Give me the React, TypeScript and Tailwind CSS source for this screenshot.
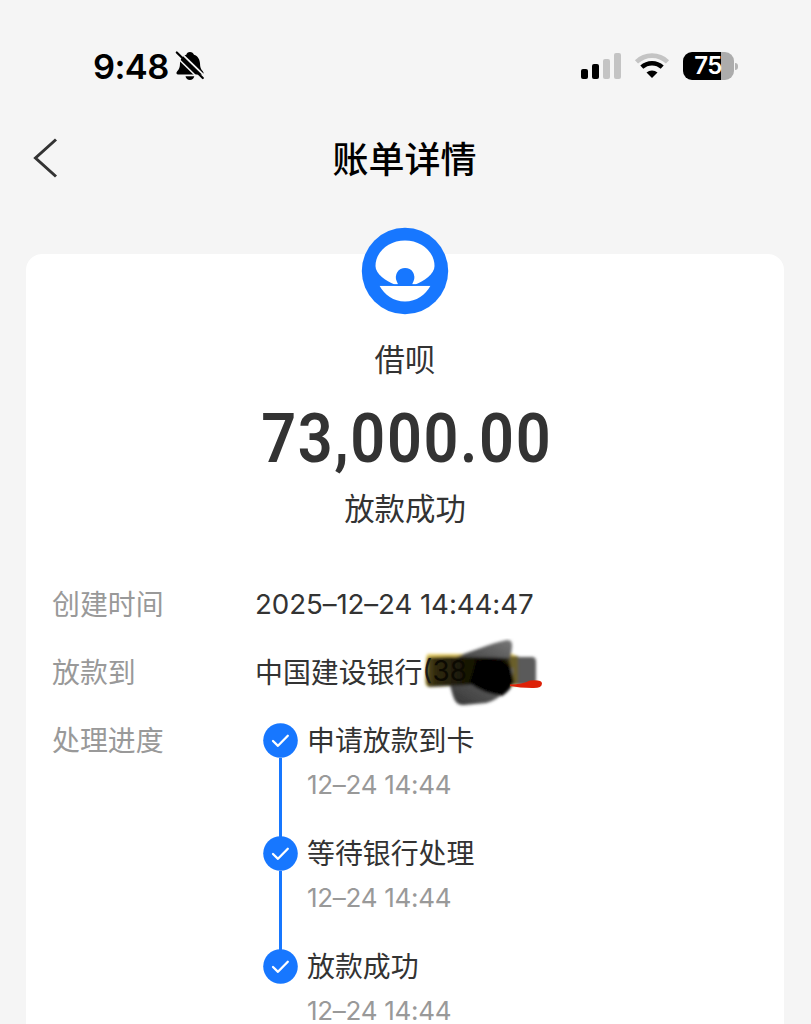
import React from 'react';

type Step = {
	title: string;
	time: string;
};

const STEPS: Step[] = [
	{ title: '申请放款到卡', time: '12–24 14:44' },
	{ title: '等待银行处理', time: '12–24 14:44' },
	{ title: '放款成功', time: '12–24 14:44' },
];

const BellOffIcon = () => (
	<svg className="ml-[6px] h-[32px] w-[30px]" viewBox="0 0 30 32">
		<path
			d="M15 2c-2 0-3.400 1.200-3.700 2.700C7 6 5.200 9.500 5 13.500c-.1 4-.8 5.600-2.800 7.700-1.400 1.500-.8 3.300 1 3.300h23.600c1.800 0 2.400-1.800 1-3.300-2-2.100-2.700-3.700-2.800-7.700-.2-4-2-7.500-6-8.800C18.400 3.200 17 2 15 2z"
			fill="#000"
		/>
		<path d="M10.500 26.300h8.800c-.4 2.400-2.200 3.800-4.400 3.800s-4-1.400-4.400-3.800z" fill="#000" />
		<path d="M3.800 0.800L31.300 27.500" stroke="#f5f5f5" strokeWidth="1.800" />
		<path d="M1.800 2.500L27.800 28" stroke="#000" strokeWidth="2.200" strokeLinecap="round" />
		<path d="M0 5.500L25.500 30.500" stroke="#f5f5f5" strokeWidth="1.600" />
	</svg>
);

const WifiIcon = () => (
	<svg className="ml-[13px] h-[28px] w-[36px]" viewBox="0 0 36 28">
		<path d="M2.500 9.800a22.500 22.500 0 0 1 31 0" fill="none" stroke="#c4c4c4" strokeWidth="4.600" />
		<path d="M7.800 15.200a15 15 0 0 1 20.400 0" fill="none" stroke="#000" strokeWidth="4.400" />
		<path d="M12.500 20.600a8 8 0 0 1 11 0L18 26z" fill="#000" />
	</svg>
);

const StatusBar = () => (
	<div className="flex h-[116px] items-center pt-[16px] pr-[73px] pl-[93px]">
		<span className="mt-[1px] font-['Inter',sans-serif] text-[34.500px] leading-[40px] font-semibold tracking-[-0.6px] text-black">
			9:48
		</span>
		<BellOffIcon />
		<div className="ml-auto flex items-center">
			<div className="flex h-[26px] items-end gap-[4px]">
				<i className="h-[10px] w-[7px] rounded-[2px] bg-black" />
				<i className="h-[15px] w-[7px] rounded-[2px] bg-black" />
				<i className="h-[20px] w-[7px] rounded-[2px] bg-[#c4c4c4]" />
				<i className="h-[26px] w-[7px] rounded-[2px] bg-[#c4c4c4]" />
			</div>
			<WifiIcon />
			<div className="ml-[13px] flex h-[28px] w-[51px] items-center justify-center rounded-[9px] bg-linear-to-r from-black from-[74%] to-[#acacac] to-[74%] font-['Inter',sans-serif] text-[24px] leading-[28px] font-semibold text-white">
				<span className="mr-[1px] tracking-[-0.6px]">75</span>
			</div>
			<i className="ml-[1px] h-[7px] w-[3px] rounded-r-full bg-[#b4b4b4]" />
		</div>
	</div>
);

const NavBar = () => (
	<div className="grid h-[84px] grid-cols-[80px_1fr_82px] items-center">
		<svg className="ml-[32px] h-[42px] w-[28px]" viewBox="0 0 28 42" fill="none">
			<path d="M24 2.500L3.500 21L24 39.500" stroke="#333" strokeWidth="3" />
		</svg>
		<h1 className="-mt-[2px] text-center text-[36px] leading-[44px] font-medium text-black">账单详情</h1>
	</div>
);

const JiebeiLogo = () => (
	<svg className="h-[88px] w-[88px]" viewBox="0 0 88 88">
		<circle cx="44" cy="44" r="43.200" fill="#1777ff" />
		<path
			d="M44 13.500c-16 0-29.500 11-29.500 25.500C14.500 47 25 54 33.500 57.500h21C63 54 73.500 47 73.500 39 73.500 24.500 60 13.500 44 13.500z"
			fill="#fff"
		/>
		<path d="M36.500 58.500q1-1.500-.8-4.300a9.300 9.300 0 1 1 16.800 0q-1.800 2.800-.8 4.300z" fill="#1777ff" />
		<path d="M18.500 58.800c16 .2 35 .2 51 0C64.500 68 55.500 74.500 44 74.500s-20.500-6.500-25.500-15.700z" fill="#fff" />
		<path d="M18 58h52" stroke="#1777ff" strokeWidth="1.400" />
	</svg>
);

/**
 * Hand-drawn strokes which cover the card number.
 */
const Scribble = () => (
	<svg className="absolute -top-[13px] -left-[6px] h-[90px] w-[140px]" viewBox="0 0 140 90">
		<defs>
			<filter id="soft" x="-10%" y="-20%" width="120%" height="140%">
				<feGaussianBlur stdDeviation="1.500" />
			</filter>
			<linearGradient id="ink" x1="0" x2="1">
				<stop offset="0" stopColor="#5a4e1e" />
				<stop offset="0.120" stopColor="#2f290d" />
				<stop offset="0.500" stopColor="#171405" />
				<stop offset="0.850" stopColor="#080700" />
				<stop offset="1" stopColor="#3a3312" />
			</linearGradient>
			<linearGradient id="wash" x1="0" y1="1" x2="1" y2="0">
				<stop offset="0" stopColor="#333" />
				<stop offset="1" stopColor="#777" />
			</linearGradient>
		</defs>
		<g filter="url(#soft)">
			<path d="M12 16h84q6 1 6 8l-1 24H10q-1-4-1-8l1-18q0-5 2-6z" fill="#e2c960" />
			<path d="M36 20C55 14 75 5 91 2q6 0 5 7l-3 22H34z" fill="url(#wash)" />
			<path d="M92 19h24q4 0 4 5v19q0 4-6 4H92z" fill="#5a5a5a" />
			<path d="M94 18h8v28h-8z" fill="#6b5f2c" />
			<path d="M33 44l4 14q3 10 11 9l22-2q8-2 14-7l13-13V30z" fill="url(#wash)" />
			<path d="M13 19q20-1 40 0l40 1q4 14 1 24l-42 3-39 2q-4-1-3-10l1-14q0-5 2-6z" fill="url(#ink)" />
			<path d="M60 22q28-6 35 8l3 14q-4 9-12 14-18-2-33-13z" fill="#060500" />
		</g>
		<path d="M94 46.500q12 0 20-4 12-1 12 3 0 5-10 4.500-12 0-22-2z" fill="#dd2108" />
	</svg>
);

const Row: React.FC<{ label: string; children: React.ReactNode }> = ({ label, children }) => (
	<div className="flex min-h-[68px] text-[27.900px] leading-[40px]">
		<span className="w-[203px] shrink-0 text-[#999]">{label}</span>
		{children}
	</div>
);

const StepItem: React.FC<{ step: Step; last: boolean }> = ({ step, last }) => (
	<li className="flex h-[113px]">
		<div className="flex w-[35px] shrink-0 flex-col items-center pt-[4px]">
			<svg className="h-[35px] w-[35px] shrink-0" viewBox="0 0 35 35" fill="none">
				<circle cx="17.500" cy="17.500" r="17.300" fill="#1777ff" />
				<path
					d="M10 18L15 22.800L24.800 12.800"
					stroke="#fff"
					strokeWidth="2.300"
					strokeLinecap="round"
					strokeLinejoin="round"
				/>
			</svg>
			{!last && <i className="-mb-[5px] w-[3px] grow bg-[#1777ff]" />}
		</div>
		<div className="ml-[9px]">
			<p className="text-[#333]">{step.title}</p>
			<p className="mt-[6px] font-['Inter','Noto_Sans_CJK_SC',sans-serif] text-[26px] tracking-[-0.3px] text-[#999]">
				{step.time}
			</p>
		</div>
	</li>
);

const App: React.FC = () => {
	return (
		<div className="h-[1024px] overflow-hidden bg-[#f5f5f5] font-['Noto_Sans_CJK_SC',sans-serif]">
			<StatusBar />
			<NavBar />
			<main className="mt-[54px] mr-[27px] ml-[26px] h-[800px] rounded-[16px] bg-white">
				<section className="flex flex-col items-center text-[#333]">
					<div className="-mt-[27px]">
						<JiebeiLogo />
					</div>
					<p className="mt-[21px] text-[30.400px] leading-[44px]">借呗</p>
					<p className="mt-[19px] ml-[3px] scale-x-90 font-['Roboto',sans-serif] text-[68px] leading-[80px] font-semibold tracking-[1.800px] whitespace-nowrap">
						73,000.00
					</p>
					<p className="mt-[6px] text-[30.400px] leading-[44px]">放款成功</p>
				</section>
				<section className="mt-[54px] pl-[26px]">
					<Row label="创建时间">
						<span className="mt-[1px] font-['Inter','Noto_Sans_CJK_SC',sans-serif] text-[27.700px] tracking-[-0.1px] text-[#333]">
							2025–12–24 14:44:47
						</span>
					</Row>
					<Row label="放款到">
						<span className="text-[#333]">中国建设银行</span>
						<span className="relative font-['Inter',sans-serif] text-[#333]">
							<Scribble />
							<span className="relative text-[#1a1a1a]">(</span>
							<span className="relative text-[#0c0a02]">38</span>
						</span>
					</Row>
					<Row label="处理进度">
						<ul className="ml-[8px]">
							{STEPS.map((step, i) => (
								<StepItem key={step.title} step={step} last={i === STEPS.length - 1} />
							))}
						</ul>
					</Row>
				</section>
			</main>
		</div>
	);
};

export default App;
